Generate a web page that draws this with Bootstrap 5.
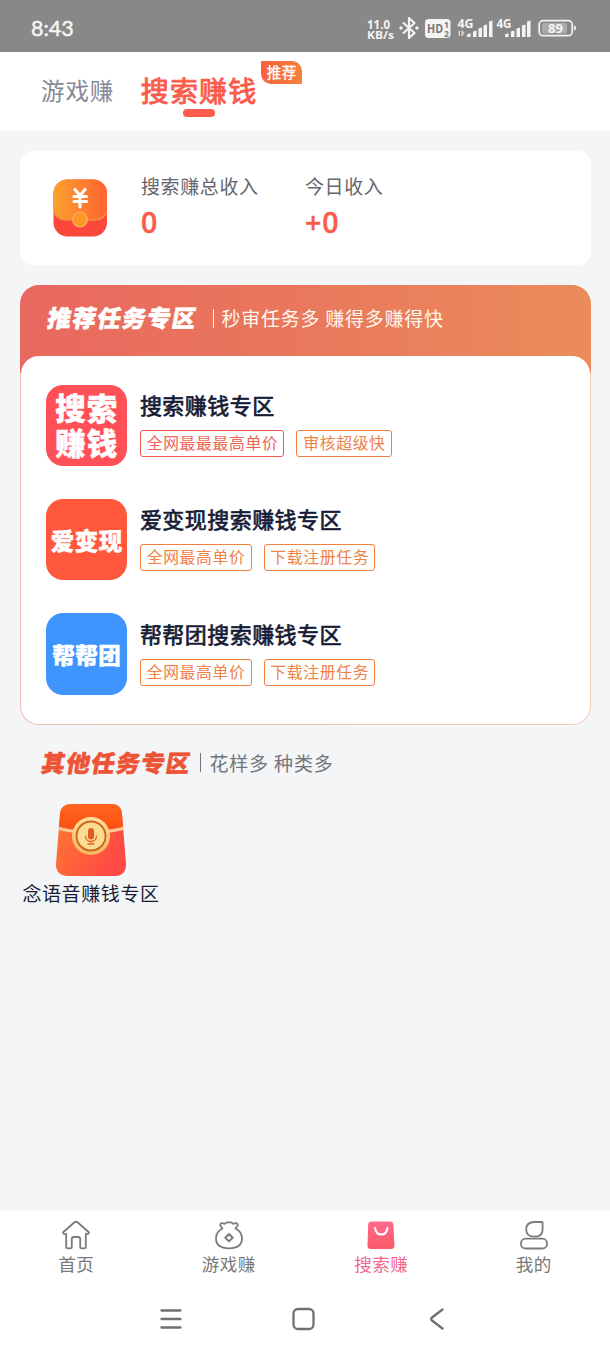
<!DOCTYPE html>
<html lang="zh-CN">
<head>
<meta charset="utf-8">
<meta name="viewport" content="width=device-width, initial-scale=1">
<title>搜索赚钱</title>
<link href="https://cdn.jsdelivr.net/npm/bootstrap@5.3.0/dist/css/bootstrap.min.css" rel="stylesheet">
<style>
body{font-family:"Noto Sans CJK SC",sans-serif;background:#f3f5f7;width:610px;height:1356px;overflow:hidden;letter-spacing:.6px;font-size:19px;line-height:28px;white-space:nowrap}
svg{display:block;flex:none}
.status{height:52px;background:#888;padding:4px 34px 0 31px;color:#f4f4f4;letter-spacing:0}
.clock{font-size:21.5px;font-family:Lato,sans-serif;font-weight:400;-webkit-text-stroke:.5px #f4f4f4}
.top{height:79px;padding:0 0 3px 41px;gap:26.5px}
.tab-a{font-size:23.5px;letter-spacing:.9px;color:#858896}
.tab-b{font-size:28px;letter-spacing:1.2px;color:#fb5b4a;-webkit-text-stroke:.9px #fb5b4a}
.tab-b::after{content:"";position:absolute;left:42px;top:33px;width:32px;height:8px;border-radius:4px;background:#fd5b4e}
.hot{position:absolute;left:120px;top:-15px;width:41px;height:23px;border-radius:1px 10px 1px 10px;background:linear-gradient(100deg,#f8603f,#f58238);color:#fff;font-size:14.5px;line-height:21px;letter-spacing:.5px;padding-left:6px;-webkit-text-stroke:.3px #fff}
.main-area{height:1080px;padding:20px 19px 0 20px}
.sum{height:114px;border-radius:13px;padding:0 0 0 33px}
.sum-col{padding:0 0 6px 33px}
.sum-col:first-of-type{width:164px}
.cap{font-size:19px;color:#64666e}
.num{font-family:"Open Sans",sans-serif;font-weight:600;font-size:28.5px;line-height:34px;color:#fb5b4a;letter-spacing:1px;margin-top:5px;-webkit-text-stroke:.4px #fb5b4a}
.zone{height:440px;margin-top:20px;border-radius:19px;background:linear-gradient(90deg,#e9685f,#e9785c 50%,#eb8c5b) top/100% 88px no-repeat,linear-gradient(90deg,#efbab4,#f3cbb4);padding:0 1px 1px}
.zone-head{height:71px;padding:0 0 5px 28px;color:#fff8ee}
.art{font-weight:900;font-size:23.5px;letter-spacing:1.4px;transform:translateY(-1px) skewX(-10deg);-webkit-text-stroke:.6px currentColor}
.bar{width:1.5px;height:19px;background:currentColor}
.zone-body{height:368px;border-radius:18px;padding:28.500px 0 0 25px;gap:33px}
.logo{width:81.4px;height:81.4px;border-radius:17px;color:#fff;font-weight:900;-webkit-text-stroke:.4px #fff;text-align:center;flex:none}
.task-info{margin-left:12.500px;padding-top:4.500px}
.ttl{font-size:22px;letter-spacing:.45px;color:#161c36;line-height:30px;-webkit-text-stroke:.7px #161c36}
.pills{gap:12px;margin-top:11px}
.tagx{height:27px;border:1.5px solid #f08040;border-radius:3px;color:#ee8247;font-size:15.8px;letter-spacing:.67px;line-height:24px;padding:0 5px 0 5.800px}
.tagx.hot-red{color:#ee6557;border-color:#ee5b4c}
.other{height:78px;padding:0 0 3px 22px;color:#72757a}
.voice{width:142px;color:#181d35}
.voice span{margin-top:2px}
.bot{height:145px;letter-spacing:.5px}
.bot .tabs{height:70px;padding-top:9px;color:#797979;font-size:17.5px;line-height:27px}
.bot .on{color:#f4648f}
</style>
</head>
<body>
<header class="status d-flex align-items-center justify-content-between">
  <span class="clock">8:43</span>
  <svg width="210" height="26" viewBox="366 15 210 26" fill="#f4f4f4" font-family="Open Sans,sans-serif" font-weight="700">
    <text x="367" y="28.500" font-size="11.500" textLength="23">11.0</text>
    <text x="367" y="38.800" font-size="11" textLength="27" lengthAdjust="spacingAndGlyphs">KB/s</text>
    <path d="M403 22.500l11.500 10.500-5.500 5V18l5.500 5-11.500 10.500" fill="none" stroke="#f4f4f4" stroke-width="2.200" stroke-linejoin="round"/>
    <circle cx="401" cy="28" r="1.700"/><circle cx="417" cy="28" r="1.700"/>
    <rect x="425" y="19" width="25.500" height="19" rx="3.500"/>
    <g fill="#777"><text x="427" y="33" font-size="12" textLength="16" lengthAdjust="spacingAndGlyphs">HD</text><text x="444" y="28" font-size="8.500">1</text><text x="444" y="36.500" font-size="8.500">2</text></g>
    <text x="457.500" y="27.500" font-size="11.500" textLength="16" lengthAdjust="spacingAndGlyphs">4G</text>
    <text x="496.500" y="27.500" font-size="11.500" textLength="15" lengthAdjust="spacingAndGlyphs">4G</text>
    <path opacity=".75" d="M457 32.500l3-2v5.500h-1.300v-4zM461.500 36v-5.500h1l2.200 3h-1.500v2.500z"/>
    <path d="M467 34.500l3.500-1.500v4H467zM473 31.500l3.500-1v6.500H473zM478.500 28.500l3.500-1v9.500h-3.500zM483.500 25.500l3.500-1v12.500h-3.500zM489 21.500l3.500-1v16.500H489zM505 34.500l3.500-1.500v4H505zM511 31.500l3.500-1v6.500H511zM516.500 28.500l3.500-1v9.500h-3.500zM522 25.500l3.500-1v12.500H522zM527 21.500l3.500-1v16.500H527z"/>
    <rect x="539.200" y="20.700" width="33" height="15" rx="4" fill="none" stroke="#f4f4f4" stroke-width="1.700"/>
    <path d="M574 25.500q2 0 2 2.500t-2 2.500z"/><rect x="542" y="23" width="25" height="10.500" rx="2" fill="#aaa"/>
    <text x="548" y="32.800" font-size="12.500" textLength="15" lengthAdjust="spacingAndGlyphs">89</text>
  </svg>
</header>
<nav class="top bg-white d-flex align-items-center">
  <span class="tab-a">游戏赚</span>
  <span class="tab-b position-relative">搜索赚钱<span class="hot">推荐</span></span>
</nav>
<main class="main-area">
  <section class="sum bg-white d-flex align-items-center">
    <svg width="55" height="58" viewBox="0 0 55 58">
      <defs><linearGradient id="a"><stop stop-color="#fba12e"/><stop offset="1" stop-color="#ff6330"/></linearGradient></defs>
      <rect x=".5" y=".5" width="53.500" height="57" rx="14" fill="#fc473b"/>
      <path d="M.5 14.500a14 14 0 0 1 14-14h25.500a14 14 0 0 1 14 14V33q-3 8-13.500 8h-26Q4 41 .5 33z" fill="url(#a)"/>
      <path d="M.8 33Q4 41 14.500 41h26q10 0 13.300-8" fill="none" stroke="#fa8c47" stroke-width="1.500"/>
      <circle cx="27" cy="40.500" r="7.300" fill="#fd9728" stroke="#fda956" stroke-width="1.500"/>
      <path d="M22 10.500l5 6 5-6M27 16v12M21 17.500h12.500M21 22.500h12.500" fill="none" stroke="#fff" stroke-width="3.100" stroke-linecap="round"/>
    </svg>
    <div class="sum-col"><div class="cap">搜索赚总收入</div><div class="num">0</div></div>
    <div class="sum-col"><div class="cap">今日收入</div><div class="num">+0</div></div>
  </section>
  <section class="zone">
    <div class="zone-head d-flex align-items-center"><span class="art text-white" style="margin-left:-1.500px">推荐任务专区</span><span class="bar" style="margin:0 7px 0 16px"></span><span style="letter-spacing:.75px">秒审任务多 赚得多赚得快</span></div>
    <div class="zone-body bg-white d-flex flex-column">
      <div class="d-flex">
        <div class="logo d-flex flex-column align-items-center justify-content-center" style="background:#ff5057;font-size:30.5px;line-height:35px;letter-spacing:1px"><span>搜索</span><span>赚钱</span></div>
        <div class="task-info"><div class="ttl">搜索赚钱专区</div><div class="d-flex pills"><span class="tagx hot-red">全网最最最高单价</span><span class="tagx">审核超级快</span></div></div>
      </div>
      <div class="d-flex">
        <div class="logo d-flex align-items-center justify-content-center" style="background:#ff583c;font-size:23.500px;letter-spacing:.4px">爱变现</div>
        <div class="task-info"><div class="ttl">爱变现搜索赚钱专区</div><div class="d-flex pills"><span class="tagx">全网最高单价</span><span class="tagx">下载注册任务</span></div></div>
      </div>
      <div class="d-flex">
        <div class="logo d-flex align-items-center justify-content-center" style="background:#3e95fd;font-size:22.500px;letter-spacing:.4px">帮帮团</div>
        <div class="task-info"><div class="ttl">帮帮团搜索赚钱专区</div><div class="d-flex pills"><span class="tagx">全网最高单价</span><span class="tagx">下载注册任务</span></div></div>
      </div>
    </div>
  </section>
  <section class="other d-flex align-items-center"><span class="art" style="color:#ed5335">其他任务专区</span><span class="bar" style="margin:0 8px 0 8.500px"></span><span style="letter-spacing:.85px">花样多 种类多</span></section>
  <section class="voice d-flex flex-column align-items-center">
    <svg width="72" height="74" viewBox="0 0 72 74">
      <defs><linearGradient id="b" x2="1" y2=".5"><stop stop-color="#ff7b30"/><stop offset="1" stop-color="#ff4a45"/></linearGradient><linearGradient id="c" x2="0" y2="1"><stop stop-color="#ff641e"/><stop offset="1" stop-color="#fb4d10"/></linearGradient><linearGradient id="d" x2="0" y2="1"><stop stop-color="#ffe0a0"/><stop offset="1" stop-color="#f5b660"/></linearGradient></defs>
      <path d="M16 1h41q9 0 10 10l4 50q0 12-11 12H13Q1 73 1 61L5 11Q6 1 16 1z" fill="url(#b)"/>
      <path d="M16 1h41q9 0 10 10l1 15Q36 36 4 26L5 11Q6 1 16 1z" fill="url(#c)"/>
      <path d="M4 25.500q32 8 64 0" fill="none" stroke="#ffc99a" stroke-width="3"/>
      <circle cx="36" cy="33" r="19" fill="url(#d)"/><circle cx="36" cy="33" r="14.500" fill="#fbdc93" stroke="#c9641e" stroke-width="1.800"/>
      <rect x="33" y="25" width="6" height="11.500" rx="3" fill="#e55b20"/><path d="M30.500 32.500q0 6 5.500 6t5.500-6M36 38.500v2.500M32.500 41h7" fill="none" stroke="#e26c29" stroke-width="1.300"/>
    </svg>
    <span>念语音赚钱专区</span>
  </section>
</main>
<footer class="bot bg-white">
  <div class="tabs row g-0 text-center">
    <div class="col d-flex flex-column align-items-center"><svg width="30" height="30" viewBox="0 0 30 30" fill="none" stroke="#7b7b7b" stroke-width="1.800" stroke-linejoin="round"><path d="M13.500 2.300q1.500-1.200 3 0L27.600 12q1 1.500-.8 1.900h-2v12.800q0 1.600-1.600 1.600h-2.400q-1.600 0-1.600-1.600V19q0-2-2-2h-4.400q-2 0-2 2v7.700q0 1.600-1.600 1.600H6.800q-1.600 0-1.600-1.600V13.900h-2Q1.400 13.500 2.400 12z"/></svg><span>首页</span></div>
    <div class="col d-flex flex-column align-items-center"><svg width="30" height="30" viewBox="0 0 30 30" fill="none" stroke="#7b7b7b" stroke-width="1.800" stroke-linejoin="round"><path d="M8.500 8.500L6.300 5.500Q6 3.200 8.200 3.200L11 3.800q1-1.600 2.500-1.500h3Q18 2.200 19 3.800l2.800-.6q2.200 0 1.900 2.300L21.500 8.500q6.500 3.300 6.500 9.800 0 10-13 10t-13-10q0-6.500 6.500-9.800z"/><path d="M15 14l3.700 3.700-3.700 3.700-3.700-3.700z" stroke-width="2"/></svg><span>游戏赚</span></div>
    <div class="col on d-flex flex-column align-items-center"><svg width="30" height="30" viewBox="0 0 30 30"><defs><linearGradient id="e" x2="0" y2="1"><stop stop-color="#ff6b8c"/><stop offset="1" stop-color="#fc5a68"/></linearGradient></defs><path d="M5.500 1.500h19Q27 1.500 27.300 4l1.200 21.500q0 3.500-3.500 3.500H5Q1.500 29 1.500 25.500L2.200 4Q2.500 1.500 5.500 1.500z" fill="url(#e)"/><path d="M9 8q1 6.500 6.300 6.500T21.500 8" fill="none" stroke="#fff" stroke-width="2" stroke-linecap="round"/></svg><span>搜索赚</span></div>
    <div class="col d-flex flex-column align-items-center"><svg width="30" height="30" viewBox="0 0 30 30" fill="none" stroke="#7b7b7b" stroke-width="1.800"><path d="M15.500 2h7.300q.8 0 .8.800v6.700q0 7.200-8.200 7.200t-8.200-7.300Q7.300 2 15.500 2z"/><rect x="1.900" y="18.700" width="26.200" height="9.800" rx="4.800"/></svg><span>我的</span></div>
  </div>
  <svg width="610" height="75" viewBox="0 1281 610 75" fill="none" stroke="#707070" stroke-width="2.300" stroke-linecap="round"><path d="M161.500 1310.500h19M161.500 1319h19M161.500 1327.500h19M442.500 1309.500l-10.500 8q-1.800 1.500 0 3l10.500 8"/><rect x="293.500" y="1309" width="20" height="20" rx="4.500"/></svg>
</footer>
<script src="https://cdn.jsdelivr.net/npm/bootstrap@5.3.0/dist/js/bootstrap.bundle.min.js"></script>
</body>
</html>
